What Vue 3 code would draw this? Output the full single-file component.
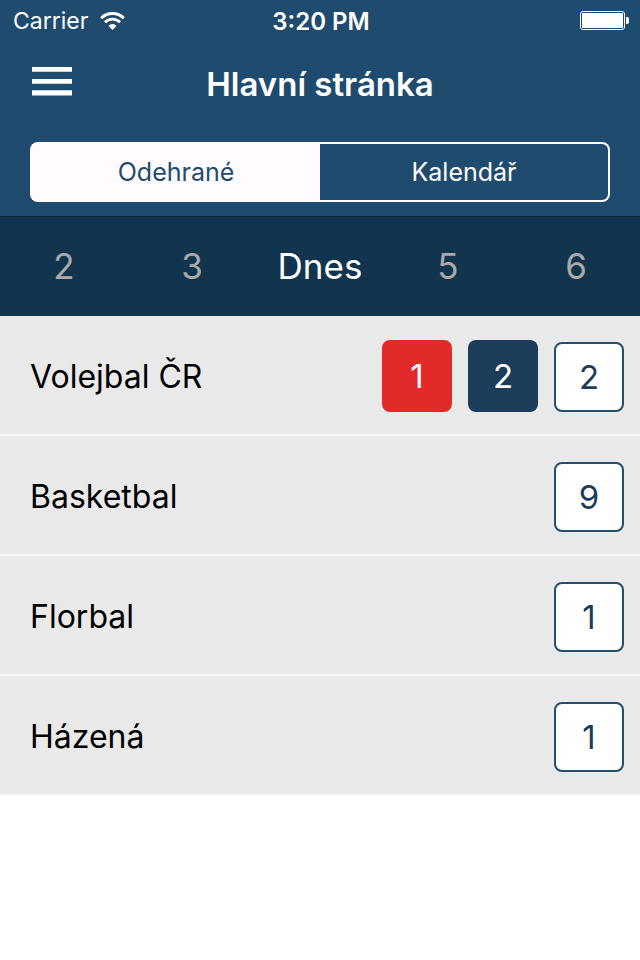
<template>
  <div class="app">
    <header class="header">
      <div class="status">
        <div class="carrier">
          <span>Carrier</span>
          <svg class="wifi" viewBox="0 0 25 18" width="25" height="18" aria-hidden="true">
            <path d="M1.2 6.2 A16 16 0 0 1 23.8 6.2" fill="none" stroke="#fff" stroke-width="3" />
            <path d="M5 10.3 A10.5 10.5 0 0 1 20 10.3" fill="none" stroke="#fff" stroke-width="2.8" />
            <path d="M12.5 18 L8.4 13.7 A5.8 5.8 0 0 1 16.6 13.7 Z" fill="#fff" />
          </svg>
        </div>
        <span class="time">3:20 PM</span>
        <svg class="battery" viewBox="0 0 49 20" width="49" height="20" aria-hidden="true">
          <rect x="0.5" y="0.5" width="44" height="18" rx="2.5" fill="none" stroke="#fff" />
          <rect x="2" y="2" width="41" height="15" rx="1" fill="#fff" />
          <path d="M46 6 h1 a2 2 0 0 1 2 2 v3 a2 2 0 0 1 -2 2 h-1 z" fill="#fff" />
        </svg>
      </div>

      <div class="navbar">
        <button class="menu" type="button" aria-label="Menu">
          <svg viewBox="0 0 40 34" width="40" height="34">
            <path d="M0 0h40v4.7H0z M0 12h40v4.7H0z M0 23.3h40v5.2H0z" fill="#fff" />
          </svg>
        </button>
        <h1>Hlavní stránka</h1>
      </div>

      <div class="segments">
        <button
          v-for="tab in tabs"
          :key="tab"
          type="button"
          class="segment"
          :class="{ active: tab === activeTab }"
          :aria-pressed="tab === activeTab"
          @click="activeTab = tab"
        >{{ tab }}</button>
      </div>
    </header>

    <nav class="days">
      <button
        v-for="day in days"
        :key="day"
        type="button"
        class="day"
        :class="{ selected: day === activeDay }"
        @click="activeDay = day"
      >{{ day }}</button>
    </nav>

    <ul class="sports">
      <li v-for="sport in sports" :key="sport.name">
        <a href="#" class="sport">
          <span class="name">{{ sport.name }}</span>
          <span class="badges">
            <span v-if="sport.live" class="badge live">{{ sport.live }}</span>
            <span v-if="sport.done" class="badge done">{{ sport.done }}</span>
            <span class="badge total">{{ sport.total }}</span>
          </span>
        </a>
      </li>
    </ul>
  </div>
</template>

<script setup>
import { ref } from 'vue'

const tabs = ['Odehrané', 'Kalendář']
const activeTab = ref('Odehrané')

const days = ['2', '3', 'Dnes', '5', '6']
const activeDay = ref('Dnes')

const sports = ref([
  { name: 'Volejbal ČR', live: 1, done: 2, total: 2 },
  { name: 'Basketbal', total: 9 },
  { name: 'Florbal', total: 1 },
  { name: 'Házená', total: 1 }
])
</script>

<style>
body {
  margin: 0;
  background: #fff;
}
</style>

<style scoped>
.app {
  font-family: Inter, "Liberation Sans", sans-serif;
  color: #000;
}

button {
  margin: 0;
  padding: 0;
  border: 0;
  background: none;
  color: inherit;
  font-family: inherit;
  cursor: pointer;
}

.header {
  background: #1f4b6e;
  color: #fff;
  border-bottom: 1px solid #0c2536;
  padding-bottom: 14px;
}

.status {
  display: grid;
  grid-template-columns: 1fr auto 1fr;
  align-items: center;
  height: 42px;
  padding: 0 11px 0 13px;
  font-size: 23px;
}

.carrier {
  display: flex;
  align-items: center;
  gap: 12px;
}

.time {
  font-size: 24px;
  font-weight: 600;
}

.battery {
  justify-self: end;
}

.navbar {
  display: grid;
  grid-template-columns: 40px 1fr 40px;
  align-items: center;
  height: 84px;
  padding: 0 32px;
}

.menu {
  height: 40px;
}

.menu svg {
  display: block;
}

h1 {
  margin: 0;
  text-align: center;
  font-size: 33px;
  font-weight: 600;
}

.segments {
  display: flex;
  margin: 16px 30px 0;
  height: 60px;
}

.segment {
  flex: 1;
  border: 2px solid #fffbff;
  font-size: 25px;
  color: #fffbff;
}

.segment:first-child {
  border-right: 0;
  border-radius: 8px 0 0 8px;
}

.segment:last-child {
  border-left: 0;
  border-radius: 0 8px 8px 0;
}

.segment.active {
  background: #fffbff;
  color: #1f4b6e;
}

.days {
  display: grid;
  grid-template-columns: repeat(5, 1fr);
  box-sizing: border-box;
  height: 99px;
  padding-bottom: 2px;
  background: #11354e;
}

.day {
  font-size: 35px;
  color: #aaa;
}

.day.selected {
  color: #fff;
}

.sports {
  margin: 0;
  padding: 0;
  list-style: none;
}

.sport {
  display: flex;
  align-items: center;
  justify-content: space-between;
  padding: 24px 16px 22px 30px;
  border-bottom: 2px solid #f7f7f7;
  background: #e9e9e9;
  color: #000;
  text-decoration: none;
}

.name {
  font-size: 32px;
}

.badges {
  display: flex;
  align-items: flex-end;
  gap: 16px;
  height: 72px;
}

.badge {
  display: flex;
  align-items: center;
  justify-content: center;
  box-sizing: border-box;
  width: 70px;
  height: 72px;
  border-radius: 8px;
  font-size: 33px;
  color: #fff;
}

.live {
  background: #e22a2a;
}

.done {
  background: #1b3d59;
}

.total {
  height: 70px;
  border: 2px solid #1f506d;
  background: #fff;
  color: #1b3d59;
}
</style>
